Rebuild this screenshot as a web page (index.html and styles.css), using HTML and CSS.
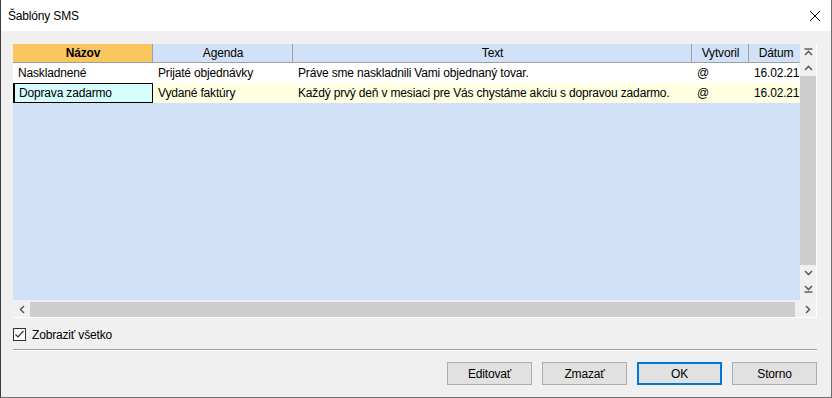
FILE: index.html
```html
<!DOCTYPE html>
<html lang="sk">
<head>
  <meta charset="UTF-8" />
  <title>Šablóny SMS</title>
  <link rel="stylesheet" href="styles.css">
</head>
<body>
  <div class="window">
    <div class="titlebar">
      <span class="title">Šablóny SMS</span>
      <svg class="close" width="12" height="12" viewBox="0 0 12 12">
        <path d="M1 1 L11 11 M11 1 L1 11" stroke="#000" stroke-width="1" fill="none" />
      </svg>
    </div>

    <div class="content">
      <div class="grid">
        <div class="grid-top">
          <div class="table">
            <div class="row head">
              <div class="cell c-name sorted">Názov</div>
              <div class="cell c-agenda">Agenda</div>
              <div class="cell c-text">Text</div>
              <div class="cell c-user">Vytvoril</div>
              <div class="cell c-date">Dátum</div>
            </div>
            <div class="row">
              <div class="cell c-name">Naskladnené</div>
              <div class="cell c-agenda">Prijaté objednávky</div>
              <div class="cell c-text">Práve sme naskladnili Vami objednaný tovar.</div>
              <div class="cell c-user">@</div>
              <div class="cell c-date">16.02.21</div>
            </div>
            <div class="row current">
              <div class="cell c-name focused">Doprava zadarmo</div>
              <div class="cell c-agenda">Vydané faktúry</div>
              <div class="cell c-text">Každý prvý deň v mesiaci pre Vás chystáme akciu s dopravou zadarmo.</div>
              <div class="cell c-user">@</div>
              <div class="cell c-date">16.02.21</div>
            </div>
          </div>

          <div class="vscroll">
            <div class="sbtn">
              <svg width="9" height="8" viewBox="0 0 9 8"><path d="M0.5 1 H8.5 M1 7 L4.5 3.5 L8 7" stroke="#606060" stroke-width="1.6" fill="none" /></svg>
            </div>
            <div class="sbtn">
              <svg width="9" height="6" viewBox="0 0 9 6"><path d="M1 5 L4.5 1.5 L8 5" stroke="#606060" stroke-width="1.6" fill="none" /></svg>
            </div>
            <div class="vthumb"></div>
            <div class="sbtn">
              <svg width="9" height="6" viewBox="0 0 9 6"><path d="M1 1 L4.5 4.5 L8 1" stroke="#606060" stroke-width="1.6" fill="none" /></svg>
            </div>
            <div class="sbtn">
              <svg width="9" height="8" viewBox="0 0 9 8"><path d="M1 1 L4.5 4.5 L8 1 M0.5 7 H8.5" stroke="#606060" stroke-width="1.6" fill="none" /></svg>
            </div>
          </div>
        </div>

        <div class="hscroll">
          <div class="hbtn">
            <svg width="6" height="9" viewBox="0 0 6 9"><path d="M5 1 L1.5 4.5 L5 8" stroke="#606060" stroke-width="1.6" fill="none" /></svg>
          </div>
          <div class="hthumb"></div>
          <div class="hbtn">
            <svg width="6" height="9" viewBox="0 0 6 9"><path d="M1 1 L4.5 4.5 L1 8" stroke="#606060" stroke-width="1.6" fill="none" /></svg>
          </div>
        </div>
      </div>

      <label class="check">
        <span class="box">
          <svg width="11" height="11" viewBox="0 0 11 11"><path d="M1.5 5.5 L4 8 L9.5 2" stroke="#333" stroke-width="1.2" fill="none" /></svg>
        </span>
        Zobraziť všetko
      </label>

      <div class="separator"></div>

      <div class="buttons">
        <button class="btn">Editovať</button>
        <button class="btn">Zmazať</button>
        <button class="btn default">OK</button>
        <button class="btn">Storno</button>
      </div>
    </div>
  </div>
</body>
</html>
```

FILE: styles.css
```css
html, body {
  margin: 0;
  padding: 0;
}
body {
  font-family: "Liberation Sans", Arial, sans-serif;
  font-size: 12px;
  letter-spacing: -0.17px;
  color: #000;
  background: #f0f0f0;
}
.window {
  width: 832px;
  height: 398px;
  box-sizing: border-box;
  border: 1px solid #6e6e6e;
  border-left-color: #3c3c3c;
  border-top: none;
  display: flex;
  flex-direction: column;
  background: #f0f0f0;
}
.titlebar {
  height: 31px;
  background: #fff;
  display: flex;
  align-items: center;
  justify-content: space-between;
  padding: 0 10px 0 7px;
  flex-shrink: 0;
}
.title {
  font-size: 12px;
  margin-top: 1px;
}
.close {
  display: block;
}
.content {
  flex: 1;
  padding: 13px 13px 0 12px;
  display: flex;
  flex-direction: column;
}

/* grid */
.grid {
  width: 804px;
  box-sizing: border-box;
  border-right: 1px solid #fff;
  border-bottom: 1px solid #fff;
}
.grid-top {
  display: flex;
  height: 256px;
}
.table {
  width: 787px;
  background: #d1e1f8;
  overflow: hidden;
}
.row {
  display: flex;
  height: 20px;
  background: #fff;
}
.row.head {
  height: 19px;
  background: #d1e1f8;
  border-bottom: 1px solid #a0a0a0;
  box-sizing: border-box;
}
.row.current {
  background: #ffffe1;
}
.cell {
  box-sizing: border-box;
  padding: 0 4px 0 5px;
  line-height: 20px;
  white-space: nowrap;
  overflow: hidden;
  flex-shrink: 0;
}
.head .cell {
  text-align: center;
  line-height: 18px;
  border-right: 1px solid #a0a0a0;
}
.head .cell.sorted {
  background: #f9c660;
  font-weight: bold;
}
.c-name { width: 140px; }
.c-agenda { width: 140px; }
.c-text { width: 399px; }
.c-user { width: 57px; }
.c-date { width: 51px; text-align: right; padding-right: 2px; }
.head .c-date { border-right: none; text-align: center; }
.focused {
  background: #d6fcfc;
  border: 1px solid #000;
  border-left-width: 2px;
  padding-left: 4px;
  line-height: 18px;
}

/* scrollbars */
.vscroll {
  width: 16px;
  display: flex;
  flex-direction: column;
  background: #f0f0f0;
}
.sbtn {
  height: 16px;
  display: flex;
  align-items: center;
  justify-content: center;
}
.vthumb {
  height: 189px;
  background: #cdcdcd;
}
.hscroll {
  height: 17px;
  display: flex;
  align-items: center;
  background: #f0f0f0;
  padding-top: 1px;
  box-sizing: border-box;
}
.hbtn {
  width: 17px;
  height: 16px;
  display: flex;
  align-items: center;
  justify-content: center;
}
.hthumb {
  width: 765px;
  height: 15px;
  background: #cdcdcd;
  margin-right: 4px;
}

/* footer */
.check {
  display: flex;
  align-items: center;
  gap: 6px;
  margin-top: 9px;
  height: 15px;
}
.box {
  width: 13px;
  height: 13px;
  box-sizing: border-box;
  border: 1px solid #333;
  background: #fff;
  display: flex;
  align-items: center;
  justify-content: center;
}
.box svg { display: block; }
.separator {
  margin-top: 7px;
  width: 804px;
  height: 1px;
  background: #a0a0a0;
  border-bottom: 1px solid #fff;
}
.buttons {
  margin-top: 11px;
  width: 804px;
  display: flex;
  justify-content: flex-end;
  gap: 10px;
}
.btn {
  width: 85px;
  height: 23px;
  box-sizing: border-box;
  border: 1px solid #adadad;
  background: #e1e1e1;
  font-family: inherit;
  font-size: 12px;
  letter-spacing: inherit;
  color: #000;
  padding: 0;
}
.btn.default {
  border: 2px solid #0078d7;
}
```
